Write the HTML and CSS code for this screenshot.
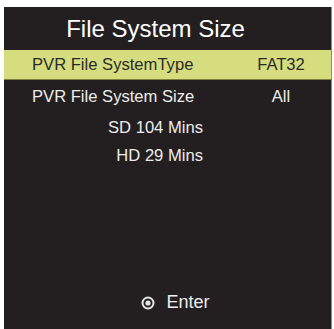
FILE: index.html
```html
<!DOCTYPE html>
<html lang="en">
<head>
  <meta charset="UTF-8" />
  <title>File System Size</title>
  <link rel="stylesheet" href="styles.css">
</head>
<body>
  <div class="panel">
    <h1>File System Size</h1>

    <div class="row selected">
      <span class="label">PVR File SystemType</span>
      <span class="value">FAT32</span>
    </div>
    <div class="row">
      <span class="label">PVR File System Size</span>
      <span class="value">All</span>
    </div>

    <div class="info">
      <div>SD 104 Mins</div>
      <div>HD 29 Mins</div>
    </div>

    <div class="footer">
      <svg class="ok-icon" width="14" height="14" viewBox="0 0 14 14">
        <circle cx="7" cy="7" r="5.5" fill="none" stroke="#e6e6e6" stroke-width="2"/>
        <circle cx="7" cy="7" r="2.6" fill="#e6e6e6"/>
      </svg>
      <span>Enter</span>
    </div>
  </div>
</body>
</html>
```

FILE: styles.css
```css
body {
  margin: 0;
  background: #ffffff;
  font-family: "Liberation Sans", Arial, sans-serif;
  width: 334px;
  height: 329px;
  overflow: hidden;
}

.panel {
  margin: 7px 2px 0 4px;
  height: 322px;
  background-color: #231f20;
  border-right: 1px solid #8a8a8a;
  color: #ececec;
  display: flex;
  flex-direction: column;
}

h1 {
  margin: 0;
  height: 43px;
  line-height: 43px;
  padding-right: 24px;
  text-align: center;
  font-size: 24px;
  font-weight: normal;
  color: #ffffff;
}

.row {
  display: flex;
  align-items: center;
  height: 30px;
  padding: 0 22px 0 28px;
  font-size: 16.6px;
}

.row .label {
  flex: 1;
}

.row .value {
  width: 56px;
  text-align: center;
}

.selected {
  background-color: #d5dd7e;
  color: #2b2b2b;
  border-bottom: 1px solid #7d7f3a;
  height: 29px;
}

.row + .row {
  height: 33px;
}

.info {
  margin-top: 1px;
  display: flex;
  flex-direction: column;
  align-items: flex-end;
  padding-right: 128px;
  font-size: 16.6px;
}

.info div {
  height: 28px;
  line-height: 28px;
}

.footer {
  margin-top: auto;
  margin-bottom: 16px;
  display: flex;
  align-items: center;
  justify-content: center;
  gap: 11px;
  padding-left: 16px;
  font-size: 18px;
}

.ok-icon {
  display: block;
}
```
